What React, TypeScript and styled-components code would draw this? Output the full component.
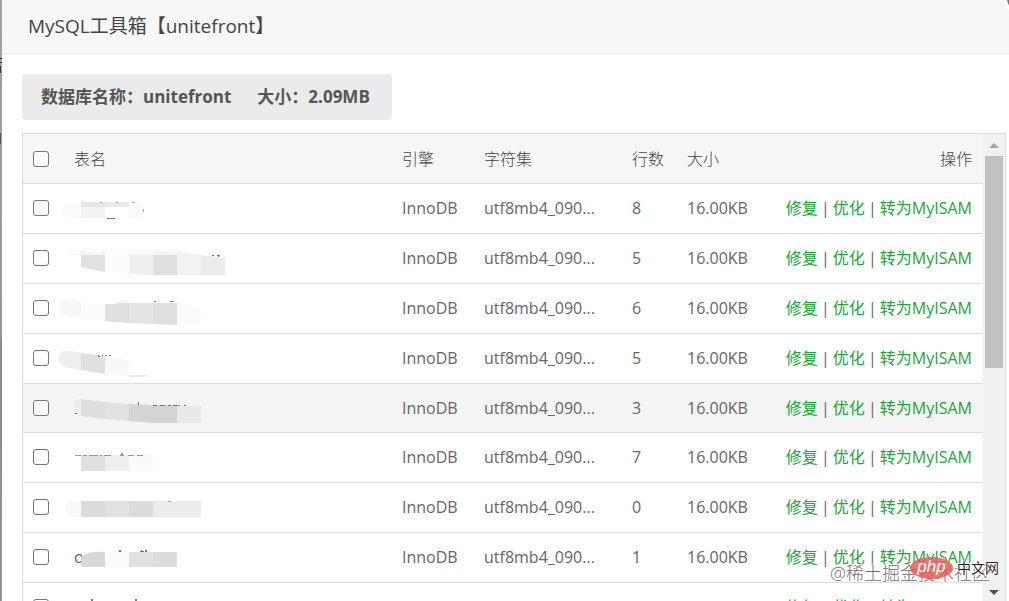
import React from "react";
import styled, { createGlobalStyle } from "styled-components";

const GlobalStyle = createGlobalStyle`
  *, *::before, *::after { box-sizing: border-box; }
  html, body { margin: 0; height: 100%; overflow: hidden; }
  body {
    font-family: "Open Sans", "Noto Sans CJK SC", sans-serif;
    font-size: 16px;
    color: #666;
    background: #fff;
  }
`;

const Shell = styled.div`
  position: relative;
  display: flex;
  height: 100vh;
  overflow: hidden;
`;

const Backdrop = styled.div`
  flex: 0 0 2px;
  background:
    linear-gradient(#333, #333) 0 58px / 2px 1px no-repeat,
    linear-gradient(#333, #333) 0 62px / 2px 1px no-repeat,
    linear-gradient(#4b2a7a, #4b2a7a) 0 66px / 1px 7px no-repeat,
    linear-gradient(#555, #555) 0 133px / 1px 11px no-repeat,
    linear-gradient(#a2a2a2, #999 55%, #8c8c8c 57%, #949494);
`;

const Dialog = styled.section`
  flex: 1;
  min-width: 0;
  display: flex;
  flex-direction: column;
  background: #fff;
`;

const TitleBar = styled.header`
  flex: none;
  height: 54px;
  padding: 0 26px;
  background: #f7f7f7;
  border-bottom: 1px solid #eee;
`;

const Title = styled.h1`
  margin: 0;
  font-size: 19px;
  font-weight: 400;
  line-height: 52px;
  color: #444;
  white-space: nowrap;
`;

const CloseButton = styled.button`
  position: absolute;
  top: -20px;
  right: -31px;
  width: 36px;
  height: 36px;
  padding: 0;
  border: 3px solid #fff;
  border-radius: 50%;
  background: #777;
`;

const Body = styled.main`
  flex: 1;
  min-height: 0;
  display: flex;
  flex-direction: column;
  align-items: flex-start;
  gap: 13px;
  padding: 20px 3px 0 20px;
`;

const Summary = styled.div`
  flex: none;
  display: flex;
  gap: 26px;
  height: 46px;
  padding: 0 22px 0 19px;
  line-height: 46px;
  font-size: 17px;
  font-weight: 700;
  color: #555;
  background: #ebebeb;
  border-radius: 4px;
  white-space: nowrap;
`;

const TableFrame = styled.div`
  flex: 1;
  min-height: 0;
  align-self: stretch;
  display: flex;
  border: 1px solid #ddd;
  border-bottom: 0;
`;

const Viewport = styled.div`
  flex: 1;
  min-width: 0;
  overflow: hidden;
`;

const Table = styled.table`
  width: 100%;
  table-layout: fixed;
  border-collapse: separate;
  border-spacing: 0;
`;

const Col = styled.col<{ $w?: number }>`
  width: ${(p) => (p.$w ? `${p.$w}px` : "auto")};
`;

const HeadCell = styled.th<{ $end?: boolean; $inset?: number }>`
  height: 50px;
  padding: 0 11px 0 ${(p) => p.$inset ?? 11}px;
  font-weight: 300;
  line-height: 24px;
  text-align: ${(p) => (p.$end ? "right" : "left")};
  color: #444;
  background: #f6f6f6;
  border-bottom: 1px solid #ddd;
  white-space: nowrap;
`;

const Row = styled.tr<{ $hot?: boolean }>`
  height: ${(p) => (p.$hot ? 49 : 50)}px;
  background: ${(p) => (p.$hot ? "#f4f4f4" : "#fff")};
`;

const Cell = styled.td<{ $inset?: number }>`
  padding: 0 11px 1px ${(p) => p.$inset ?? 11}px;
  line-height: 24px;
  border-bottom: 1px solid #ddd;
  white-space: nowrap;
`;

const NameCell = styled(Cell)`
  padding: 0;
  vertical-align: top;
`;

const NameArt = styled.svg`
  display: block;
  width: 180px;
  height: 46px;
`;

const Check = styled.input`
  appearance: none;
  display: block;
  width: 16px;
  height: 16px;
  margin: 0;
  border: 1px solid #767676;
  border-radius: 3px;
  background: #fff;
`;

const Actions = styled.div`
  display: flex;
  justify-content: flex-end;
`;

const Divider = styled.span`
  width: 15px;
  text-align: center;
`;

const Action = styled.a`
  color: #20a53a;
  text-decoration: none;
`;

const ScrollTrack = styled.div`
  flex: 0 0 22px;
  display: flex;
  flex-direction: column;
  align-items: center;
  justify-content: space-between;
  background: #f1f1f1;
`;

const ScrollThumb = styled.div`
  width: 18px;
  height: 212px;
  background: #c1c1c1;
  margin-bottom: auto;
`;

const ScrollArrow = styled.svg`
  display: block;
  width: 18px;
  height: 22px;
`;

const Watermark = styled.div`
  position: absolute;
  right: 19px;
  bottom: 16px;
  font-size: 18px;
  font-weight: 300;
  line-height: 24px;
  color: rgba(80, 80, 80, 0.85);
  text-shadow: 1px 0 #fff, -1px 0 #fff, 0 1px #fff, 0 -1px #fff;
  white-space: nowrap;
`;

const SiteBadge = styled.div`
  position: absolute;
  right: 10px;
  bottom: 21px;
  display: flex;
  align-items: center;
  gap: 4px;
  font-size: 14px;
  line-height: 24px;
  color: #2d1c1c;
  text-shadow: 1px 0 #fff, -1px 0 #fff, 0 1px #fff, 0 -1px #fff;
`;

const PhpOval = styled.span`
  width: 43px;
  height: 22px;
  border-radius: 50%;
  background: rgba(235, 92, 88, 0.86);
  color: #fff;
  font-family: "Liberation Sans", sans-serif;
  font-size: 17px;
  font-style: italic;
  font-weight: 400;
  line-height: 20px;
  text-align: center;
  text-shadow: none;
`;

/* Each entry: path, fill. Coordinates are relative to the name cell. */
type Shape = [string, string];

const DARK = "#777";

const rows: { count: number; hot?: boolean; initial?: string; art: Shape[] }[] = [
  {
    count: 8,
    art: [
      ["M12 18H25V34H12Q6 33 6 26Q6 19 12 18Z", "#fbfbfb"],
      ["M25 18H49V23H25Z", "#e6e6e6"],
      ["M25 23H49V34H25Z", "#f3f3f3"],
      ["M49 18H73V23H49Z", "#e9e9e9"],
      ["M73 18H83Q88 20 88 26Q88 33 82 34H73Z", "#fbfbfb"],
      ["M51 34H59V35H51Z", DARK],
      ["M44 18h2v1h-2ZM60 18h2v1h-2ZM76 18h3v1h-3ZM87 25h1v3h-1Z", "#aaa"],
    ],
  },
  {
    count: 5,
    art: [
      ["M12 17Q18 15 25 17V21H12Z", "#fcfcfc"],
      ["M25 16L43 20L47 16H49V21H25Z", "#f5f5f5"],
      ["M25 21H49V38L25 33Z", "#e2e2e2"],
      ["M49 16H73V40L49 38Z", "#fcfcfc"],
      ["M73 16H97V21H73Z", "#fafafa"],
      ["M73 21H97V41L73 40Z", "#efefef"],
      ["M97 16L121 17V21H97Z", "#f5f5f5"],
      ["M97 21H121V41H97Z", "#dfdfdf"],
      ["M121 17L145 21V41H121Z", "#f2f2f2"],
      ["M145 21L169 24V41H145Z", "#ececec"],
      ["M156 21h2v1h-2ZM161 21h3v1h-3ZM162 22h1v1h-1Z", DARK],
    ],
  },
  {
    count: 6,
    art: [
      ["M8 15L25 18V34L8 31Q2 28 3 21Q4 16 8 15Z", "#f8f8f8"],
      ["M25 18L49 20V37L25 34Z", "#fcfcfc"],
      ["M49 20H59L62 18H73V39L49 37Z", "#dfdfdf"],
      ["M62 18Q64 16 68 17H73V19H62Z", "#f5f5f5"],
      ["M73 19H97V40L73 39Z", "#e4e4e4"],
      ["M97 19H121V41L97 40Z", "#dfdfdf"],
      ["M121 19L145 23V41H121Z", "#fbfbfb"],
      ["M98 17h2v1h-2ZM114 17h3v1h-3Z", "#888"],
    ],
  },
  {
    count: 5,
    art: [
      ["M8 17L25 18V36L8 33Q2 29 3 23Q4 18 8 17Z", "#eee"],
      ["M25 19L49 22V40L25 36Z", "#e0e0e0"],
      ["M49 23L73 26V42L49 40Z", "#f8f8f8"],
      ["M73 41H92L88 43H73Z", "#ebebeb"],
      ["M42 21h1v1h1v1h-2ZM46 21h1v1h-1ZM50 21h1v1h-1ZM53 21h2v1h-2Z", DARK],
    ],
  },
  {
    count: 3,
    hot: true,
    art: [
      ["M20 15H25V32Q18 31 18 24Q18 17 20 15Z", "#ededed"],
      ["M25 15L49 18V35L25 32Z", "#dedede"],
      ["M49 18L73 20V37L49 35Z", "#e2e2e2"],
      ["M73 20L97 21H121V39H97L73 37Z", "#d4d4d4"],
      ["M121 22H145V39H121Z", "#e9e9e9"],
      ["M19 29h2v1h-2ZM82 18h1v3h-1ZM97 21h4v1h-4ZM104 21h5v1h-5ZM112 21h3v1h-3ZM117 21h5v1h-5ZM123 21h1v1h-1ZM128 21h2v1h-2Z", DARK],
    ],
  },
  {
    count: 7,
    art: [
      ["M25 22H49V38H25Z", "#e0e0e0"],
      ["M49 22H73V38H49Z", "#eee"],
      ["M73 22H97V38H73Z", "#fafafa"],
      ["M19 22h6v1h-6ZM27 22h4v1h-4ZM33 22h9v1h-9ZM44 22h2v1h-2ZM48 22h7v1h-7ZM65 20h2v2h1v1h-4v-1h1ZM72 22h6v1h-6ZM81 22h6v1h-6Z", "#999"],
    ],
  },
  {
    count: 0,
    art: [
      ["M15 18H25V34H16Q10 32 10 26Q10 19 15 18Z", "#f9f9f9"],
      ["M25 18H49V34H25Z", "#dbdbdb"],
      ["M49 18H73V34H49Z", "#e1e1e1"],
      ["M73 18H97V34H73Z", "#dcdcdc"],
      ["M97 18H145V34H97Z", "#ececec"],
      ["M112 18h3v1h-3Z", "#aaa"],
    ],
  },
  {
    count: 1,
    initial: "o",
    art: [
      ["M25 24Q32 18 49 19V34H30Q26 34 25 33Z", "#d8d8d8"],
      ["M49 19H73V34H49Z", "#fbfbfb"],
      ["M73 19H97V34H73Z", "#e1e1e1"],
      ["M97 19H121V34H97Z", "#dcdcdc"],
      ["M63 17h2v2h-2ZM85 17h1v1h2v1h-4v-1h1ZM89 17h2v2h-2Z", DARK],
    ],
  },
  {
    count: 1,
    art: [["M35 16h2v3h-2ZM79 16h2v3h-2Z", DARK]],
  },
];

const headings = ["引擎", "字符集", "行数", "大小"];

export default function App() {
  return (
    <>
      <GlobalStyle />
      <Shell>
        <Backdrop />
        <Dialog aria-labelledby="dialog-title">
          <TitleBar>
            <Title id="dialog-title">MySQL工具箱【unitefront】</Title>
          </TitleBar>
          <Body>
            <Summary>
              <span>数据库名称：unitefront</span>
              <span>大小：2.09MB</span>
            </Summary>
            <TableFrame>
              <Viewport>
                <Table>
                  <colgroup>
                    <Col $w={33} />
                    <Col />
                    <Col $w={82} />
                    <Col $w={148} />
                    <Col $w={55} />
                    <Col $w={84} />
                    <Col $w={223} />
                  </colgroup>
                  <thead>
                    <tr>
                      <HeadCell $inset={10}>
                        <Check type="checkbox" aria-label="全选" />
                      </HeadCell>
                      <HeadCell $inset={18}>表名</HeadCell>
                      {headings.map((h) => (
                        <HeadCell key={h}>{h}</HeadCell>
                      ))}
                      <HeadCell $end>操作</HeadCell>
                    </tr>
                  </thead>
                  <tbody>
                    {rows.map((row, i) => (
                      <Row key={i} $hot={row.hot}>
                        <Cell $inset={10}>
                          <Check type="checkbox" aria-label={`选择第 ${i + 1} 行`} />
                        </Cell>
                        <NameCell>
                          <NameArt viewBox="0 0 180 46" aria-hidden="true">
                            {row.initial && (
                              <text x="18" y="30" fontSize="16" fill="#666">
                                {row.initial}
                              </text>
                            )}
                            {row.art.map(([d, fill], n) => (
                              <path key={n} d={d} fill={fill} />
                            ))}
                          </NameArt>
                        </NameCell>
                        <Cell>InnoDB</Cell>
                        <Cell>utf8mb4_090...</Cell>
                        <Cell>{row.count}</Cell>
                        <Cell>16.00KB</Cell>
                        <Cell>
                          <Actions>
                            <Action href="#repair">修复</Action>
                            <Divider>|</Divider>
                            <Action href="#optimize">优化</Action>
                            <Divider>|</Divider>
                            <Action href="#convert">转为MyISAM</Action>
                          </Actions>
                        </Cell>
                      </Row>
                    ))}
                  </tbody>
                </Table>
              </Viewport>
              <ScrollTrack>
                <ScrollArrow viewBox="0 0 18 22">
                  <path d="M4 14L9 9L14 14Z" fill="#a3a3a3" />
                </ScrollArrow>
                <ScrollThumb />
                <ScrollArrow viewBox="0 0 18 22">
                  <path d="M4 11H14L9 16Z" fill="#505050" />
                </ScrollArrow>
              </ScrollTrack>
            </TableFrame>
          </Body>
        </Dialog>
        <CloseButton aria-label="关闭" />
        <Watermark>@稀土掘金技术社区</Watermark>
        <SiteBadge>
          <PhpOval>php</PhpOval>
          <span>中文网</span>
        </SiteBadge>
      </Shell>
    </>
  );
}
